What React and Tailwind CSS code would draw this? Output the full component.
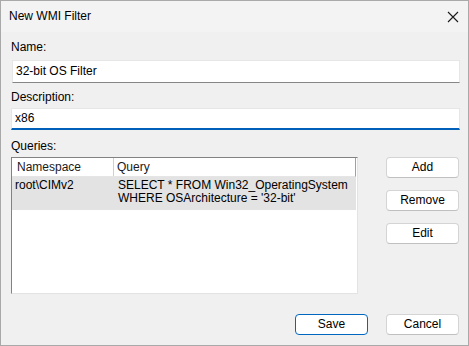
export default function App() {
  const font = { fontFamily: '"Liberation Sans", Arial, sans-serif' };
  return (
    <div style={font} className="w-[469px] h-[346px] border border-[#a9a9a9] bg-[#f0f0f0] flex flex-col text-[12px] leading-[15px] text-black">
      <div className="h-[31px] bg-[#f3f3f3] flex items-center justify-between pl-[8px] pr-[8px]">
        <span className="text-[12px]">New WMI Filter</span>
        <svg width="12" height="12" viewBox="0 0 12 12" className="mr-[1px]">
          <path d="M1 1 L11 11 M11 1 L1 11" stroke="#1a1a1a" strokeWidth="1.1" />
        </svg>
      </div>
      <div className="flex flex-col pl-[10px] pr-[8px] pt-[8px]">
        <div>Name:</div>
        <div className="mt-[5px] h-[23px] bg-white border border-[#e6e6e6] border-b-[#868686] flex items-center pl-[3px] ml-[1px]">
          32-bit OS Filter
        </div>
        <div className="mt-[7px]">Description:</div>
        <div className="mt-[3px] h-[22px] bg-white border border-[#e6e6e6] border-b-2 border-b-[#005fb8] flex items-center pl-[3px]">
          x86
        </div>
        <div className="mt-[9px]">Queries:</div>
        <div className="mt-[3px] flex">
          <div className="w-[347px] h-[137px] bg-white border border-[#828282] border-r-[#e3e3e3] border-b-[#e3e3e3] flex flex-col">
            <div className="w-[344px] h-[19px] flex border-b border-[#e5e5e5] border-r border-r-[#a0a0a0]">
              <div className="w-[102px] pl-[5px] flex items-center border-r border-[#d0d0d0] text-[#1a1a1a]">Namespace</div>
              <div className="flex-1 pl-[3px] flex items-center text-[#1a1a1a]">Query</div>
            </div>
            <div className="w-[344px] h-[33px] bg-[#e3e3e3] flex pt-[2px]">
              <div className="w-[103px] pl-[3px] leading-[13px]">root\CIMv2</div>
              <div className="flex-1 pl-[3px] leading-[13px]">
                <div>SELECT * FROM Win32_OperatingSystem</div>
                <div>WHERE OSArchitecture = '32-bit'</div>
              </div>
            </div>
          </div>
          <div className="ml-[28px] flex flex-col gap-[12px]">
            <button className="w-[73px] h-[21px] bg-white border border-[#d4d4d4] border-b-[#c0c0c0] rounded-[4px] text-[12px]">Add</button>
            <button className="w-[73px] h-[21px] bg-white border border-[#d4d4d4] border-b-[#c0c0c0] rounded-[4px] text-[12px]">Remove</button>
            <button className="w-[73px] h-[21px] bg-white border border-[#d4d4d4] border-b-[#c0c0c0] rounded-[4px] text-[12px]">Edit</button>
          </div>
        </div>
        <div className="mt-[20px] flex justify-end gap-[18px] pr-[1px]">
          <button className="w-[73px] h-[21px] bg-white border border-[#0067c0] rounded-[4px] text-[12px]">Save</button>
          <button className="w-[73px] h-[21px] bg-white border border-[#d4d4d4] border-b-[#c0c0c0] rounded-[4px] text-[12px]">Cancel</button>
        </div>
      </div>
    </div>
  );
}
